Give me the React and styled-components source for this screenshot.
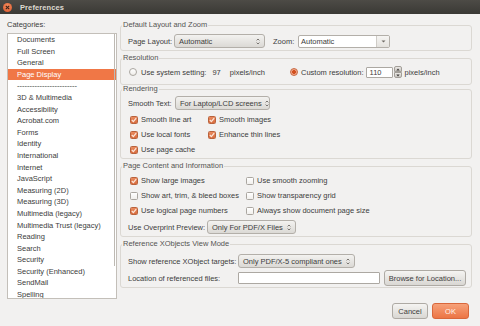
import React from 'react';
import styled, { createGlobalStyle } from 'styled-components';

const Global = createGlobalStyle`
  html, body { margin: 0; padding: 0; background: #f2f1f0; }
  body {
    font-family: "Liberation Sans", Arial, sans-serif;
    font-size: 7.5px;
    color: #3c3c3c;
  }
  * { box-sizing: border-box; }
`;

const Window = styled.div`
  width: 480px;
  height: 326px;
  display: flex;
  flex-direction: column;
  background: #f2f1f0;
  overflow: hidden;
`;

const TitleBar = styled.div`
  height: 14px;
  flex: none;
  display: flex;
  align-items: center;
  gap: 8px;
  padding-left: 3px;
  background: linear-gradient(#4d4b46, #3a3935);
`;

const CloseBtn = styled.div`
  width: 9px;
  height: 9px;
  border-radius: 50%;
  background: radial-gradient(circle at 50% 35%, #f6905f, #d9532a);
  display: flex;
  align-items: center;
  justify-content: center;
`;

const Title = styled.div`
  font-weight: bold;
  color: #dfdbd2;
  font-size: 7.5px;
  letter-spacing: 0.1px;
`;

const Body = styled.div`
  display: flex;
  flex-direction: column;
  padding: 6px 8px 0 7px;
`;

const Main = styled.div`
  display: flex;
  gap: 3px;
  align-items: flex-start;
`;

const LeftCol = styled.div`
  width: 110px;
  display: flex;
  flex-direction: column;
`;

const SideLabel = styled.div`
  line-height: 10px;
  height: 10px;
  margin-bottom: 3px;
`;

const List = styled.div`
  position: relative;
  height: 266px;
  border: 1px solid #c3bfb9;
  background: #fff;
  overflow: hidden;
`;

const Item = styled.div`
  height: 11.6px;
  line-height: 11.6px;
  padding-left: 9px;
  white-space: nowrap;
  background: ${p => (p.$selected ? '#f07746' : 'transparent')};
  color: ${p => (p.$selected ? '#ffffff' : '#3c3c3c')};
`;

const ScrollThumb = styled.div`
  position: absolute;
  right: 1px;
  top: 0;
  width: 1.5px;
  height: 232px;
  background: #bdb9b3;
`;

const RightCol = styled.div`
  width: 352px;
  display: flex;
  flex-direction: column;
`;

const Frame = styled.fieldset`
  margin: ${p => p.$mt}px 0 0 0;
  padding: 0;
  border: 1px solid #dbd8d3;
  border-radius: 3px;
  min-width: 0;
`;

const Legend = styled.legend`
  padding: 0 1px;
  margin-left: 1px;
  line-height: 8px;
  color: #555452;
`;

const FrameBody = styled.div`
  padding: ${p => p.$pt}px 6px ${p => p.$pb}px 7px;
  display: flex;
  flex-direction: column;
  gap: 2px;
`;

const FieldRow = styled.div`
  display: flex;
  align-items: center;
  height: ${p => p.$h || 14}px;
`;

const FieldLabel = styled.div`
  width: ${p => p.$w}px;
  flex: none;
  margin-left: ${p => p.$ml || 0}px;
  white-space: nowrap;
`;

const Combo = styled.div`
  width: ${p => p.$w}px;
  height: 14px;
  flex: none;
  display: flex;
  align-items: center;
  justify-content: space-between;
  gap: 3px;
  padding: 0 4px 0 4px;
  border: 1px solid #b3afa9;
  border-radius: 3px;
  background: linear-gradient(#f3f2f0, #dbd9d5);
  color: #3c3c3c;
  white-space: nowrap;
`;

const ComboEntry = styled.div`
  width: ${p => p.$w}px;
  height: 13px;
  flex: none;
  display: flex;
  border: 1px solid #b3afa9;
  border-radius: 2px;
  background: #fff;
  overflow: hidden;
`;

const EntryText = styled.div`
  flex: 1;
  padding-left: 2px;
  line-height: 11px;
`;

const EntryButton = styled.div`
  width: 13px;
  border-left: 1px solid #cfccc7;
  background: linear-gradient(#f6f5f3, #e4e2de);
  display: flex;
  align-items: center;
  justify-content: center;
`;

const Entry = styled.div`
  width: ${p => p.$w}px;
  height: ${p => p.$h || 11}px;
  flex: none;
  margin-left: ${p => p.$ml || 0}px;
  border: 1px solid #aca8a2;
  border-radius: 1px;
  background: #fff;
  padding-left: 3px;
  line-height: ${p => (p.$h || 11) - 2}px;
`;

const Spin = styled.div`
  width: 8px;
  height: 12px;
  margin-left: 1px;
  flex: none;
  display: flex;
  flex-direction: column;
`;

const SpinHalf = styled.div`
  flex: 1;
  border: 1px solid #a29e98;
  border-radius: ${p => (p.$up ? '2px 2px 0 0' : '0 0 2px 2px')};
  background: linear-gradient(#ebe9e6, #c9c6c1);
  display: flex;
  align-items: center;
  justify-content: center;
`;

const Text = styled.span`
  margin-left: ${p => p.$ml || 0}px;
  white-space: nowrap;
`;

const RadioGrid = styled.div`
  display: grid;
  grid-template-columns: 161px auto;
  align-items: center;
  height: 14px;
  padding-left: 1px;
`;

const RadioItem = styled.div`
  display: flex;
  align-items: center;
`;

const Radio = styled.div`
  width: 8px;
  height: 8px;
  flex: none;
  border-radius: 50%;
  border: 1px solid ${p => (p.$on ? '#c8673f' : '#aaa6a0')};
  background: ${p =>
    p.$on
      ? 'radial-gradient(circle, #d2501f 0, #d2501f 1.6px, #f0a486 2.2px, #f3b49a 100%)'
      : 'linear-gradient(#ffffff, #efedea)'};
`;

const CheckGrid = styled.div`
  display: grid;
  grid-template-columns: ${p => p.$cols};
  grid-auto-rows: 15px;
  align-items: center;
  padding-left: 2px;
`;

const CheckItem = styled.div`
  display: flex;
  align-items: center;
  gap: 3px;
  white-space: nowrap;
`;

const Box = styled.div`
  width: 8px;
  height: 8px;
  flex: none;
  border-radius: 1.5px;
  border: 1px solid ${p => (p.$on ? '#b9623c' : '#aaa6a0')};
  background: ${p => (p.$on ? 'linear-gradient(#e98a5e, #d86c3e)' : 'linear-gradient(#ffffff, #f1efec)')};
  display: flex;
  align-items: center;
  justify-content: center;
`;

const Button = styled.div`
  width: ${p => p.$w}px;
  height: ${p => p.$h || 16}px;
  flex: none;
  margin-left: ${p => p.$ml || 0}px;
  display: flex;
  align-items: center;
  justify-content: center;
  border-radius: 3px;
  white-space: nowrap;
  border: 1px solid ${p => (p.$primary ? '#d9673b' : '#aeaaa4')};
  background: ${p =>
    p.$primary ? 'linear-gradient(#f6a179, #ec7545)' : 'linear-gradient(#f5f4f2, #d9d7d3)'};
  color: ${p => (p.$primary ? '#fff4ec' : '#3c3c3c')};
`;

const ButtonRow = styled.div`
  display: flex;
  justify-content: flex-end;
  gap: 4px;
  margin-top: 4px;
  padding-right: 3px;
`;

const UpDown = () => (
  <svg width="4" height="7" viewBox="0 0 4 7" style={{ flex: 'none' }}>
    <path d="M0.6 2.4 L2 1 L3.4 2.4 M0.6 4.6 L2 6 L3.4 4.6" stroke="#6e6a65" strokeWidth="0.9" fill="none" />
  </svg>
);

const DownTri = () => (
  <svg width="5" height="3" viewBox="0 0 5 3">
    <path d="M0.5 0.5 L4.5 0.5 L2.5 2.6 Z" fill="#6e6a65" />
  </svg>
);

const SpinTri = ({ up }) => (
  <svg width="4" height="3" viewBox="0 0 4 3">
    <path d={up ? 'M0.3 2.6 L3.7 2.6 L2 0.4 Z' : 'M0.3 0.4 L3.7 0.4 L2 2.6 Z'} fill="#3f3d3a" />
  </svg>
);

const Tick = () => (
  <svg width="6" height="6" viewBox="0 0 6 6">
    <path d="M0.8 3 L2.4 4.6 L5.2 1.2" stroke="#fbe6da" strokeWidth="1.3" fill="none" />
  </svg>
);

const Check = ({ on, children }) => (
  <CheckItem>
    <Box $on={on}>{on && <Tick />}</Box>
    <span>{children}</span>
  </CheckItem>
);

const categories = [
  'Documents',
  'Full Screen',
  'General',
  'Page Display',
  '------------------------',
  '3D & Multimedia',
  'Accessibility',
  'Acrobat.com',
  'Forms',
  'Identity',
  'International',
  'Internet',
  'JavaScript',
  'Measuring (2D)',
  'Measuring (3D)',
  'Multimedia (legacy)',
  'Multimedia Trust (legacy)',
  'Reading',
  'Search',
  'Security',
  'Security (Enhanced)',
  'SendMail',
  'Spelling',
];

export default function App() {
  return (
    <>
      <Global />
      <Window>
        <TitleBar>
          <CloseBtn>
            <svg width="5" height="5" viewBox="0 0 5 5">
              <path d="M0.8 0.8 L4.2 4.2 M4.2 0.8 L0.8 4.2" stroke="#3a2018" strokeWidth="1.1" />
            </svg>
          </CloseBtn>
          <Title>Preferences</Title>
        </TitleBar>
        <Body>
          <Main>
            <LeftCol>
              <SideLabel>Categories:</SideLabel>
              <List>
                {categories.map(c => (
                  <Item key={c} $selected={c === 'Page Display'}>
                    {c}
                  </Item>
                ))}
                <ScrollThumb />
              </List>
            </LeftCol>
            <RightCol>
              <Frame $mt={1}>
                <Legend>Default Layout and Zoom</Legend>
                <FrameBody $pt={5} $pb={2}>
                  <FieldRow>
                    <FieldLabel $w={46}>Page Layout:</FieldLabel>
                    <Combo $w={91}>
                      <span>Automatic</span>
                      <UpDown />
                    </Combo>
                    <FieldLabel $w={25} $ml={8}>Zoom:</FieldLabel>
                    <ComboEntry $w={92}>
                      <EntryText>Automatic</EntryText>
                      <EntryButton>
                        <DownTri />
                      </EntryButton>
                    </ComboEntry>
                  </FieldRow>
                </FrameBody>
              </Frame>
              <Frame $mt={3}>
                <Legend>Resolution</Legend>
                <FrameBody $pt={3} $pb={5}>
                  <RadioGrid>
                    <RadioItem>
                      <Radio />
                      <Text $ml={4}>Use system setting:</Text>
                      <Text $ml={6}>97</Text>
                      <Text $ml={9}>pixels/inch</Text>
                    </RadioItem>
                    <RadioItem>
                      <Radio $on />
                      <Text $ml={3}>Custom resolution:</Text>
                      <Entry $w={27} $ml={2}>110</Entry>
                      <Spin>
                        <SpinHalf $up>
                          <SpinTri up />
                        </SpinHalf>
                        <SpinHalf>
                          <SpinTri />
                        </SpinHalf>
                      </Spin>
                      <Text $ml={3}>pixels/inch</Text>
                    </RadioItem>
                  </RadioGrid>
                </FrameBody>
              </Frame>
              <Frame $mt={0}>
                <Legend>Rendering</Legend>
                <FrameBody $pt={3} $pb={1}>
                  <FieldRow>
                    <FieldLabel $w={47}>Smooth Text:</FieldLabel>
                    <Combo $w={95}>
                      <span>For Laptop/LCD screens</span>
                      <UpDown />
                    </Combo>
                  </FieldRow>
                  <CheckGrid $cols="78px auto">
                    <Check on>Smooth line art</Check>
                    <Check on>Smooth images</Check>
                    <Check on>Use local fonts</Check>
                    <Check on>Enhance thin lines</Check>
                    <Check on>Use page cache</Check>
                  </CheckGrid>
                </FrameBody>
              </Frame>
              <Frame $mt={3}>
                <Legend>Page Content and Information</Legend>
                <FrameBody $pt={3} $pb={2}>
                  <CheckGrid $cols="116px auto">
                    <Check on>Show large images</Check>
                    <Check>Use smooth zooming</Check>
                    <Check>Show art, trim, &amp; bleed boxes</Check>
                    <Check>Show transparency grid</Check>
                    <Check on>Use logical page numbers</Check>
                    <Check>Always show document page size</Check>
                  </CheckGrid>
                  <FieldRow>
                    <FieldLabel $w={79}>Use Overprint Preview:</FieldLabel>
                    <Combo $w={89}>
                      <span>Only For PDF/X Files</span>
                      <UpDown />
                    </Combo>
                  </FieldRow>
                </FrameBody>
              </Frame>
              <Frame $mt={3}>
                <Legend>Reference XObjects View Mode</Legend>
                <FrameBody $pt={6} $pb={1}>
                  <FieldRow>
                    <FieldLabel $w={110}>Show reference XObject targets:</FieldLabel>
                    <Combo $w={117}>
                      <span>Only PDF/X-5 compliant ones</span>
                      <UpDown />
                    </Combo>
                  </FieldRow>
                  <FieldRow $h={16}>
                    <FieldLabel $w={110}>Location of referenced files:</FieldLabel>
                    <Entry $w={142} $h={12} />
                    <Button $w={82} $ml={4}>Browse for Location...</Button>
                  </FieldRow>
                </FrameBody>
              </Frame>
            </RightCol>
          </Main>
          <ButtonRow>
            <Button $w={36}>Cancel</Button>
            <Button $w={37} $primary>OK</Button>
          </ButtonRow>
        </Body>
      </Window>
    </>
  );
}
